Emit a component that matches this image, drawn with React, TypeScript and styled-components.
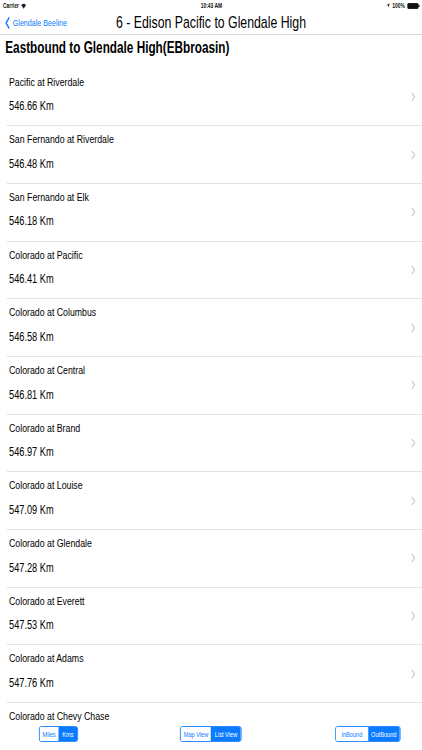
import styled, { createGlobalStyle } from "styled-components";

// the shot is an iPad screen squeezed to 75% in width, so the page is laid
// out at full width and then squeezed the same way
const PAGE_W = 422 / 0.75;

const GlobalStyle = createGlobalStyle`
  html, body {
    margin: 0;
    padding: 0;
    background: #fff;
    overflow: hidden;
  }
  body {
    font-family: "Liberation Sans", Arial, Helvetica, sans-serif;
    color: #000;
  }
`;

const Stage = styled.div`
  width: ${PAGE_W}px;
  height: 750px;
  transform: scaleX(0.75);
  transform-origin: 0 0;
  display: flex;
  flex-direction: column;
  background: #fff;
  overflow: hidden;
`;

const StatusBar = styled.div`
  height: 11px;
  display: grid;
  grid-template-columns: 1fr auto 1fr;
  align-items: center;
  padding: 0 3px 0 4px;
  font-size: 6.5px;
  font-weight: 600;
  color: #111;
`;

const StatusSide = styled.div<{ $end?: boolean }>`
  display: flex;
  align-items: center;
  gap: 3px;
  justify-content: ${(p) => (p.$end ? "flex-end" : "flex-start")};
`;

const NavBar = styled.div`
  height: 23px;
  display: grid;
  grid-template-columns: 1fr auto 1fr;
  align-items: center;
  padding: 0 6px;
  border-bottom: 1px solid #d6d6d6;
`;

const BackButton = styled.div`
  display: flex;
  align-items: center;
  gap: 4px;
  color: #0a7bff;
  font-size: 9.5px;
  padding-left: 1px;
`;

const NavTitle = styled.div`
  font-size: 16.4px;
  color: #000;
  white-space: nowrap;
`;

const SectionHeader = styled.div`
  height: 33.6px;
  box-sizing: border-box;
  padding: 4px 0 0 7px;
  font-size: 15.7px;
  line-height: 18px;
  font-weight: bold;
  white-space: nowrap;
`;

const List = styled.div`
  flex: 1;
  overflow: hidden;
`;

const Row = styled.div`
  height: 57.7px;
  box-sizing: border-box;
  margin-left: 9px;
  padding: 0 9px 0 3px;
  border-bottom: 1px solid #e3e3e6;
  display: flex;
  align-items: center;
`;

const RowText = styled.div`
  flex: 1;
  align-self: flex-start;
  padding-top: 6px;
`;

const StopName = styled.div`
  font-size: 11.7px;
  line-height: 14px;
  white-space: nowrap;
`;

const Distance = styled.div`
  margin-top: 9.5px;
  font-size: 12.3px;
  line-height: 16px;
  white-space: nowrap;
`;

const Toolbar = styled.div`
  height: 28px;
  box-sizing: border-box;
  padding: 4px 29px 0;
  display: grid;
  grid-template-columns: 1fr auto 1fr;
  align-items: start;
  background: #fff;
`;

const Segmented = styled.div<{ $place: "start" | "center" | "end"; $shift?: number }>`
  justify-self: ${(p) => p.$place};
  margin-left: ${(p) => p.$shift ?? 0}px;
  display: flex;
  height: 16px;
  box-sizing: border-box;
  border: 1px solid #0a7bff;
  border-radius: 3px;
  overflow: hidden;
`;

const Segment = styled.div<{ $w: number; $on?: boolean }>`
  width: ${(p) => p.$w}px;
  display: flex;
  align-items: center;
  justify-content: center;
  font-size: 7.5px;
  white-space: nowrap;
  color: ${(p) => (p.$on ? "#fff" : "#0a7bff")};
  background: ${(p) => (p.$on ? "#0a7bff" : "#fff")};
`;

const Chevron = () => (
  <svg width="6" height="10" viewBox="0 0 6 10">
    <polyline points="1,1 5,5 1,9" fill="none" stroke="#c7c7cc" strokeWidth="1.2" />
  </svg>
);

const BackChevron = () => (
  <svg width="6" height="12" viewBox="0 0 6 12">
    <polyline points="5,1 1,6 5,11" fill="none" stroke="#0a7bff" strokeWidth="1.8" strokeLinecap="round" strokeLinejoin="round" />
  </svg>
);

const Wifi = () => (
  <svg width="7" height="6" viewBox="0 0 14 11">
    <path d="M7 11 L0.5 3.6 A10 10 0 0 1 13.5 3.6 Z" fill="#222" />
  </svg>
);

const Arrow = () => (
  <svg width="5" height="5" viewBox="0 0 10 10">
    <path d="M9.5 0.5 L0.5 4.5 L5 5 L5.5 9.5 Z" fill="#222" />
  </svg>
);

const Battery = () => (
  <svg width="17" height="6" viewBox="0 0 17 6">
    <rect x="0.5" y="0.5" width="14" height="5" rx="1" fill="#111" stroke="#111" />
    <rect x="15" y="2" width="1.5" height="2" fill="#111" />
  </svg>
);

// the last stop is cut by the toolbar, only its name shows
const stops: { name: string; km?: string }[] = [
  { name: "Pacific at Riverdale", km: "546.66" },
  { name: "San Fernando at Riverdale", km: "546.48" },
  { name: "San Fernando at Elk", km: "546.18" },
  { name: "Colorado at Pacific", km: "546.41" },
  { name: "Colorado at Columbus", km: "546.58" },
  { name: "Colorado at Central", km: "546.81" },
  { name: "Colorado at Brand", km: "546.97" },
  { name: "Colorado at Louise", km: "547.09" },
  { name: "Colorado at Glendale", km: "547.28" },
  { name: "Colorado at Everett", km: "547.53" },
  { name: "Colorado at Adams", km: "547.76" },
  { name: "Colorado at Chevy Chase" },
];

export default function App() {
  return (
    <>
      <GlobalStyle />
      <Stage>
        <StatusBar>
          <StatusSide>
            <span>Carrier</span>
            <Wifi />
          </StatusSide>
          <span>10:43 AM</span>
          <StatusSide $end>
            <Arrow />
            <span>100%</span>
            <Battery />
          </StatusSide>
        </StatusBar>

        <NavBar>
          <BackButton>
            <BackChevron />
            <span>Glendale Beeline</span>
          </BackButton>
          <NavTitle>6 - Edison Pacific to Glendale High</NavTitle>
          <div />
        </NavBar>

        <SectionHeader>Eastbound to Glendale High(EBbroasin)</SectionHeader>

        <List>
          {stops.map((s) => (
            <Row key={s.name}>
              <RowText>
                <StopName>{s.name}</StopName>
                {s.km && <Distance>{s.km} Km</Distance>}
              </RowText>
              <Chevron />
            </Row>
          ))}
        </List>

        <Toolbar>
          <Segmented $place="start" $shift={23}>
            <Segment $w={25}>Miles</Segment>
            <Segment $w={25} $on>Kms</Segment>
          </Segmented>
          <Segmented $place="center">
            <Segment $w={40}>Map View</Segment>
            <Segment $w={40} $on>List View</Segment>
          </Segmented>
          <Segmented $place="end">
            <Segment $w={43}>InBound</Segment>
            <Segment $w={42} $on>OutBound</Segment>
          </Segmented>
        </Toolbar>
      </Stage>
    </>
  );
}
